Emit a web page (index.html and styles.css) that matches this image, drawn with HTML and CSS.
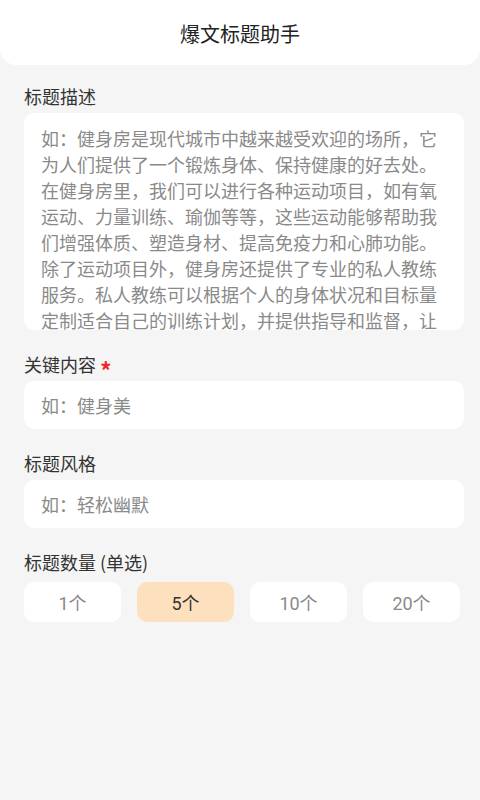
FILE: index.html
```html
<!DOCTYPE html>
<html lang="zh-CN">
<head>
<meta charset="utf-8">
<title>爆文标题助手</title>
<link rel="stylesheet" href="styles.css">
</head>
<body>
<header class="topbar"><h1 class="title">爆文标题助手</h1></header>
<main class="form">
  <section class="field">
    <label class="label">标题描述</label>
    <textarea class="area" placeholder="如：健身房是现代城市中越来越受欢迎的场所，它为人们提供了一个锻炼身体、保持健康的好去处。在健身房里，我们可以进行各种运动项目，如有氧运动、力量训练、瑜伽等等，这些运动能够帮助我们增强体质、塑造身材、提高免疫力和心肺功能。除了运动项目外，健身房还提供了专业的私人教练服务。私人教练可以根据个人的身体状况和目标量定制适合自己的训练计划，并提供指导和监督，让您更加高效地达到健身目标。"></textarea>
  </section>
  <section class="field">
    <label class="label">关键内容<span class="req">*</span></label>
    <input class="input" type="text" placeholder="如：健身美">
  </section>
  <section class="field">
    <label class="label">标题风格</label>
    <input class="input" type="text" placeholder="如：轻松幽默">
  </section>
  <section class="field">
    <label class="label">标题数量 (单选)</label>
    <div class="options">
      <button class="opt">1个</button>
      <button class="opt opt-active">5个</button>
      <button class="opt">10个</button>
      <button class="opt">20个</button>
    </div>
  </section>
</main>
</body>
</html>
```
FILE: styles.css
```css
* { box-sizing: border-box; }
html, body { margin: 0; padding: 0; }
body {
  background: #f5f5f5;
  font-family: "Noto Sans CJK SC", "Noto Sans", sans-serif;
  color: #333;
  min-height: 800px;
}
.topbar {
  background: #fff;
  height: 65px;
  border-radius: 0 0 16px 16px;
  display: flex;
  align-items: center;
  justify-content: center;
}
.title {
  margin: 0;
  font-size: 20px;
  font-weight: 400;
  color: #222;
  line-height: 28px;
  padding-top: 3px;
}
.form {
  display: flex;
  flex-direction: column;
  gap: 22px;
  padding: 19px 16px 0 24px;
}
.field {
  display: flex;
  flex-direction: column;
  gap: 5px;
}
.label {
  font-size: 18px;
  line-height: 24px;
  height: 24px;
  color: #333;
}
.req {
  color: #f0262b;
  font-size: 23px;
  font-weight: 700;
  line-height: 0;
  margin-left: 4px;
  vertical-align: -8px;
}
.area, .input {
  width: 100%;
  border: none;
  outline: none;
  background: #fff;
  border-radius: 10px;
  font-family: inherit;
  font-size: 18px;
  color: #333;
}
.area {
  height: 217px;
  padding: 12px 24px 0 17px;
  line-height: 26px;
  resize: none;
  overflow: hidden;
}
.input {
  height: 48px;
  padding: 0 17px;
}
.area::placeholder, .input::placeholder { color: #8a8a8a; }
.options {
  display: flex;
  gap: 16px;
  margin-top: 3px;
}
.opt {
  width: 97px;
  height: 40px;
  border: none;
  border-radius: 10px;
  background: #fff;
  font-family: Roboto, "Noto Sans CJK SC", sans-serif;
  font-size: 18px;
  color: #8a8a8a;
  padding: 0;
}
.opt-active {
  background: #fde1bf;
  color: #333;
}
```
